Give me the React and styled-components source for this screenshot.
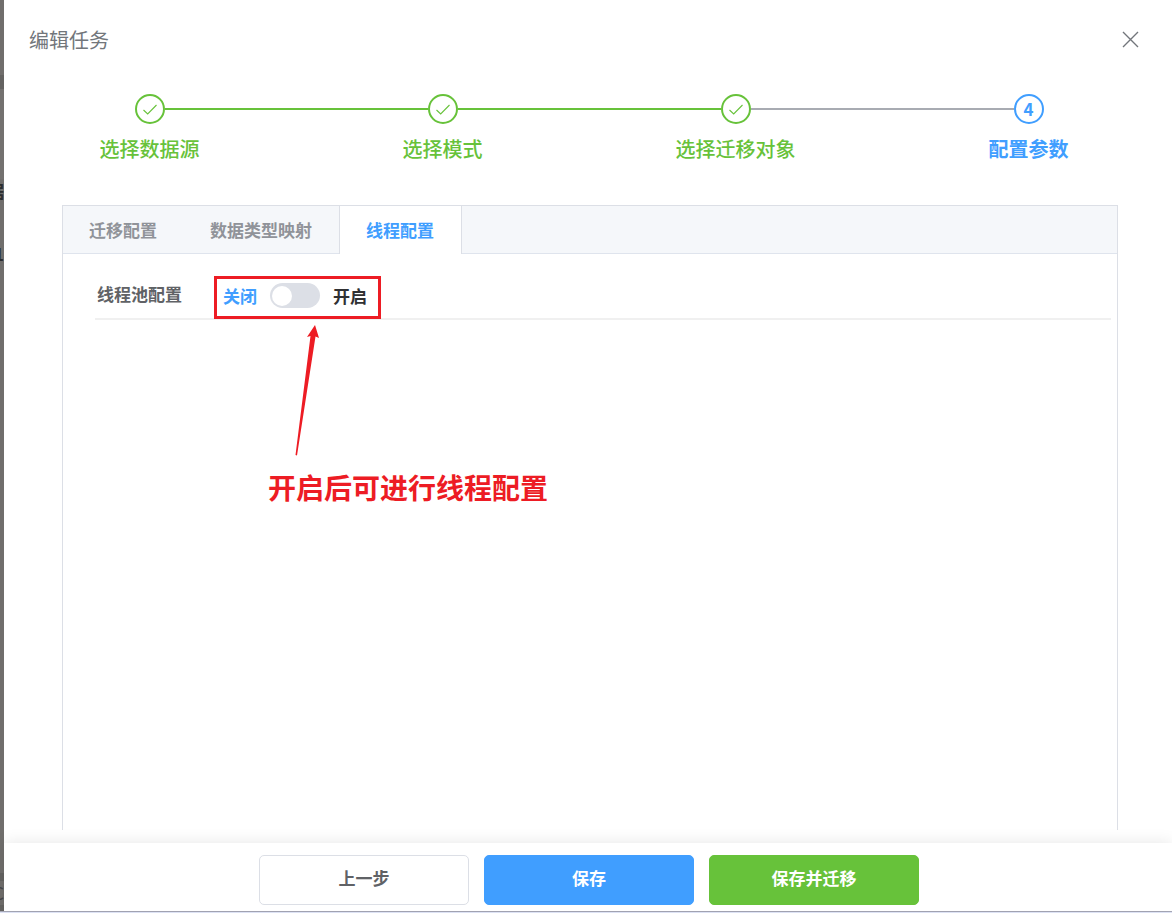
import { useState } from "react";
import styled, { createGlobalStyle } from "styled-components";

const GlobalStyle = createGlobalStyle`
  * {
    box-sizing: border-box;
  }
  body {
    margin: 0;
    background-color: #fff;
    font-family: "Noto Sans CJK SC", sans-serif;
    color: #303133;
  }
  button, input {
    font-family: inherit;
  }
`;

const Page = styled.div`
  display: flex;
  height: 100vh;
  overflow: hidden;
  border-bottom: 1px solid #dde2f4;
`;

const Backdrop = styled.div`
  width: 4px;
  flex: none;
  overflow: hidden;
  display: flex;
  flex-direction: column;
  align-items: flex-end;
  background-color: #706e6c;
  border-bottom: 1px solid #a9abba;
`;

const BackdropBar = styled.div`
  width: 100%;
  height: ${(props) => props.$height}px;
  background-color: ${(props) => props.$color};
`;

const BackdropSpace = styled.div`
  flex: 1;
`;

const BackdropText = styled.span`
  font-size: 17px;
  font-weight: ${(props) => (props.$light ? 400 : 700)};
  line-height: 24px;
  color: ${(props) => (props.$light ? "#45464a" : "#2b2c2e")};
`;

const Drawer = styled.main`
  flex: 1;
  min-width: 0;
  display: flex;
  flex-direction: column;
  background-color: #fff;
  border-bottom: 1px solid #a9abba;
`;

const Header = styled.header`
  display: flex;
  align-items: center;
  justify-content: space-between;
  height: 80px;
  padding: 0 33px 0 25px;
`;

const Title = styled.h1`
  margin: 0;
  font-size: 20px;
  font-weight: 400;
  line-height: 30px;
  color: #72767b;
`;

const CloseButton = styled.button`
  display: flex;
  padding: 0 0 2px;
  border: 0;
  background: none;
  color: #72767b;
  cursor: pointer;
`;

const Steps = styled.ol`
  display: grid;
  grid-template-columns: repeat(4, 1fr);
  margin: 14px -3px 0 -1px;
  padding: 0;
  list-style: none;
`;

const stepColors = {
  done: "#67c23a",
  active: "#409eff",
  wait: "#a8abb2",
  none: "transparent",
};

const Step = styled.li`
  display: flex;
  flex-direction: column;
  color: ${(props) => stepColors[props.$status]};
`;

const StepHead = styled.div`
  display: flex;
  align-items: center;
`;

const StepLine = styled.span`
  flex: 1;
  height: 2px;
  background-color: ${(props) => stepColors[props.$status]};
`;

const StepCircle = styled.span`
  display: flex;
  align-items: center;
  justify-content: center;
  width: 30px;
  height: 30px;
  border: 2px solid currentColor;
  border-radius: 50%;
  font-size: 17px;
  font-weight: 700;
  line-height: 26px;
`;

const StepTitle = styled.span`
  margin-top: 10px;
  text-align: center;
  font-size: 20px;
  font-weight: ${(props) => (props.$status === "active" ? 700 : 500)};
  line-height: 30px;
`;

const Panel = styled.section`
  flex: 1;
  margin: 41px 54px 13px 58px;
  border: 1px solid #dcdfe6;
  border-bottom: 0;
`;

const TabBar = styled.div`
  display: flex;
  height: 48px;
  background-color: #f5f7fa;
  border-bottom: 1px solid #dfe4ed;
`;

const Tab = styled.button`
  height: 48px;
  padding: 0 27px 0 26px;
  border: 0 solid #dcdfe6;
  border-width: ${(props) => (props.$active ? "0 1px" : "0")};
  background-color: ${(props) => (props.$active ? "#fff" : "transparent")};
  color: ${(props) => (props.$active ? "#409eff" : "#909399")};
  font-size: 17px;
  font-weight: 600;
  line-height: 48px;
  cursor: pointer;
`;

const ConfigRow = styled.div`
  display: flex;
  align-items: flex-start;
  gap: 32px;
  margin: 0 6px 0 32px;
  padding-top: 22px;
  border-bottom: 2px solid #f0f0f0;
`;

const RowLabel = styled.label`
  padding-left: 2px;
  font-size: 17px;
  font-weight: 700;
  line-height: 36px;
  color: #606266;
`;

const Highlight = styled.div`
  position: relative;
  display: flex;
  align-items: center;
  gap: 13px;
  height: 43px;
  margin-bottom: -1px;
  padding: 0 11px 4px 6px;
  border: 3px solid #ed1c24;
`;

const SwitchText = styled.span`
  font-size: 17px;
  font-weight: 600;
  line-height: 32px;
  color: ${(props) => (props.$active ? "#409eff" : "#303133")};
`;

const Switch = styled.input`
  appearance: none;
  position: relative;
  width: 50px;
  height: 25px;
  margin: 0;
  border-radius: 13px;
  background-color: ${(props) => (props.checked ? "#409eff" : "#dcdfe6")};
  cursor: pointer;

  &::before {
    content: "";
    position: absolute;
    top: 3px;
    left: ${(props) => (props.checked ? 28 : 2)}px;
    width: 20px;
    height: 20px;
    border-radius: 50%;
    background-color: #fff;
  }
`;

const Arrow = styled.svg`
  position: absolute;
  top: 46px;
  left: 77px;
`;

const Note = styled.strong`
  position: absolute;
  top: 187px;
  left: 51px;
  white-space: nowrap;
  font-size: 28px;
  font-weight: 700;
  line-height: 42px;
  color: #ed1c24;
`;

const Footer = styled.footer`
  display: flex;
  justify-content: center;
  gap: 15px;
  height: 68px;
  padding: 12px 0 6px 2px;
  background-color: #fff;
  box-shadow: 0 0 15px rgba(0, 0, 0, 0.1);
`;

const Button = styled.button`
  width: 210px;
  height: 50px;
  padding: 0 0 4px;
  border: 1px solid ${(props) => props.$border || props.$color};
  border-radius: 5px;
  background-color: ${(props) => props.$color};
  color: ${(props) => (props.$border ? "#606266" : "#fff")};
  font-size: 17px;
  font-weight: 700;
  line-height: 44px;
  cursor: pointer;
`;

const steps = [
  { title: "选择数据源", status: "done", before: "none", after: "done" },
  { title: "选择模式", status: "done", before: "done", after: "done" },
  { title: "选择迁移对象", status: "done", before: "done", after: "wait" },
  { title: "配置参数", status: "active", before: "wait", after: "none" },
];

const tabs = ["迁移配置", "数据类型映射", "线程配置"];

const CheckIcon = () => (
  <svg width="16" height="16" viewBox="0 0 16 16" fill="none" aria-hidden="true">
    <path d="M1.5 9 L5.7 13 L14.5 4" stroke="currentColor" strokeWidth="1.1" />
  </svg>
);

const CloseIcon = () => (
  <svg width="17" height="17" viewBox="0 0 17 17" fill="none" aria-hidden="true">
    <path d="M1 1 L16 16 M16 1 L1 16" stroke="currentColor" strokeWidth="1.4" />
  </svg>
);

const App = () => {
  const [activeTab, setActiveTab] = useState("线程配置");
  const [enabled, setEnabled] = useState(false);

  return (
    <>
      <GlobalStyle />
      <Page>
        <Backdrop aria-hidden="true">
          <BackdropBar $height={75} $color="#706e6c" />
          <BackdropBar $height={14} $color="#646361" />
          <BackdropBar $height={90} $color="#73716f" />
          <BackdropText>据</BackdropText>
          <BackdropBar $height={39} $color="#706e6c" />
          <BackdropText>1</BackdropText>
          <BackdropSpace />
          <BackdropBar $height={8} $color="#646361" />
          <BackdropText $light>C</BackdropText>
          <BackdropBar $height={6} $color="#646361" />
        </Backdrop>
        <Drawer>
          <Header>
            <Title>编辑任务</Title>
            <CloseButton aria-label="关闭">
              <CloseIcon />
            </CloseButton>
          </Header>
          <Steps>
            {steps.map((step, index) => (
              <Step key={step.title} $status={step.status}>
                <StepHead>
                  <StepLine $status={step.before} />
                  <StepCircle>
                    {step.status === "done" ? <CheckIcon /> : index + 1}
                  </StepCircle>
                  <StepLine $status={step.after} />
                </StepHead>
                <StepTitle $status={step.status}>{step.title}</StepTitle>
              </Step>
            ))}
          </Steps>
          <Panel>
            <TabBar role="tablist">
              {tabs.map((tab) => (
                <Tab
                  key={tab}
                  role="tab"
                  aria-selected={tab === activeTab}
                  $active={tab === activeTab}
                  onClick={() => setActiveTab(tab)}
                >
                  {tab}
                </Tab>
              ))}
            </TabBar>
            <ConfigRow>
              <RowLabel htmlFor="threadPool">线程池配置</RowLabel>
              <Highlight>
                <SwitchText $active={!enabled}>关闭</SwitchText>
                <Switch
                  id="threadPool"
                  type="checkbox"
                  role="switch"
                  checked={enabled}
                  onChange={(e) => setEnabled(e.target.checked)}
                />
                <SwitchText $active={enabled}>开启</SwitchText>
                <Arrow width="28" height="132" viewBox="0 0 28 132" aria-hidden="true">
                  <path
                    d="M21 0 L25 13 L21.5 11.5 L3 130.5 L1.5 130 L16.5 11 L13 12 Z"
                    fill="#ed1c24"
                  />
                </Arrow>
                <Note>开启后可进行线程配置</Note>
              </Highlight>
            </ConfigRow>
          </Panel>
          <Footer>
            <Button $color="#fff" $border="#dcdfe6">
              上一步
            </Button>
            <Button $color="#409eff">保存</Button>
            <Button $color="#67c23a">保存并迁移</Button>
          </Footer>
        </Drawer>
      </Page>
    </>
  );
};

export default App;
